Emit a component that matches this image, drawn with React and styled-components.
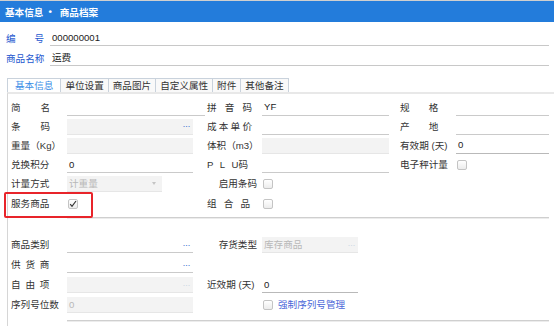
import React from "react";
import styled, { createGlobalStyle } from "styled-components";

const Global = createGlobalStyle`
  html, body { margin: 0; padding: 0; background: #fff; }
  body {
    font-family: "Liberation Sans", "Noto Sans CJK SC", sans-serif;
    font-size: 9.6px;
    color: #333;
  }
  #root { width: 554px; height: 326px; overflow: hidden; }
`;

const Page = styled.div`
  width: 554px;
  height: 326px;
  overflow: hidden;
  border-top: 1px solid #cfcfcf;
  box-sizing: border-box;
`;

const Header = styled.div`
  height: 21px;
  background: #237cdb;
  color: #fff;
  font-weight: bold;
  display: flex;
  align-items: center;
  padding-left: 5px;
`;

const Dot = styled.span`
  margin: 0 8px 0 5px;
`;

const TopForm = styled.div`
  padding: 5px 5px 0 6px;
`;

const TopRow = styled.div`
  display: flex;
  align-items: flex-end;
  height: 19px;
  line-height: 14px;
  margin-bottom: ${p => p.$mb || 0}px;
`;

const TopLabel = styled.div`
  width: 38px;
  flex: none;
  color: #2457cf;
  white-space: nowrap;
  display: flex;
  justify-content: space-between;
`;

const TopValue = styled.div`
  flex: 1;
  margin-left: 6px;
  padding-left: 2px;
  border-bottom: 1px solid #c8c8c8;
  color: #222;
  line-height: 14px;
`;

const Tabs = styled.div`
  display: flex;
  padding-left: 7px;
  margin-top: 12px;
  height: 14px;
`;

const Tab = styled.div`
  height: 14px;
  box-sizing: border-box;
  border: 1px solid #c9d2dc;
  border-bottom: none;
  margin-right: -1px;
  padding: 0 ${p => (p.$active ? 7 : 4)}px;
  background: ${p => (p.$active ? "#fff" : "#f9f9f9")};
  color: ${p => (p.$active ? "#3a8ee6" : "#333")};
  line-height: 14px;
  white-space: nowrap;
`;

const Panel = styled.div`
  margin-left: 7px;
  border-top: 2px solid #e8e8e8;
  border-left: 1px solid #d6d6d6;
  padding: 4px 0 0 3px;
  height: 240px;
`;

const Row = styled.div`
  display: grid;
  grid-template-columns: 196px 193px 149px;
  height: ${p => p.$h}px;
  align-items: center;
`;

const Field = styled.div`
  display: flex;
  align-items: center;
  position: relative;
  height: 100%;
`;

const LabelBox = styled.div`
  width: ${p => p.$w}px;
  flex: none;
  display: flex;
  justify-content: ${p => (p.$right ? "flex-end" : "flex-start")};
  padding-right: ${p => (p.$right ? 5 : 0)}px;
  box-sizing: border-box;
  color: #333;
  white-space: nowrap;
  line-height: 14px;
`;

const Spread = styled.span`
  display: inline-flex;
  justify-content: space-between;
  width: ${p => p.$span}px;
`;

function Label({ text, parts, w, span, right }) {
  const items = parts || [...(text || "")];
  return (
    <LabelBox $w={w} $right={right}>
      {span ? (
        <Spread $span={span}>
          {items.map((c, i) => (
            <span key={i}>{c}</span>
          ))}
        </Spread>
      ) : (
        text
      )}
    </LabelBox>
  );
}

const Control = styled.div`
  width: ${p => p.$w}px;
  height: 16px;
  box-sizing: border-box;
  border-bottom: 1px solid ${p => (p.$gray ? "#e6e6e6" : p.$dark ? "#b9b9b9" : "#cacaca")};
  background: ${p => (p.$gray ? "#f3f3f3" : "transparent")};
  display: flex;
  align-items: center;
  justify-content: space-between;
  padding: 0 3px 0 2px;
  color: ${p => (p.$muted ? "#b8b8b8" : "#222")};
  line-height: 14px;
  white-space: nowrap;
`;

const Dots = styled.span`
  color: ${p => (p.$faint ? "#cdd6e4" : "#3d6fd1")};
  font-size: 9px;
  letter-spacing: -0.5px;
`;

const Arrow = styled.span`
  width: 0;
  height: 0;
  border-left: 2.5px solid transparent;
  border-right: 2.5px solid transparent;
  border-top: 3px solid #c4c4c4;
  margin-right: 3px;
`;

const CheckBox = styled.span`
  width: 10px;
  height: 10px;
  box-sizing: border-box;
  border: 1px solid #c4c4c4;
  border-radius: 2px;
  background: linear-gradient(#ffffff, #ececec);
  display: inline-flex;
  align-items: center;
  justify-content: center;
  margin-left: 1px;
  flex: none;
`;

function Check({ checked }) {
  return (
    <CheckBox>
      {checked && (
        <svg width="8" height="8" viewBox="0 0 8 8">
          <path d="M1.2 4.2 L3 6.3 L7 1" fill="none" stroke="#333" strokeWidth="1.2" />
        </svg>
      )}
    </CheckBox>
  );
}

const CheckText = styled.span`
  margin-left: 5px;
  color: #4a66d8;
  line-height: 14px;
  white-space: nowrap;
`;

const Highlight = styled.div`
  position: absolute;
  left: -7px;
  top: -2.4px;
  width: 89px;
  height: 26px;
  box-sizing: border-box;
  border: 2px solid #e8242a;
  border-radius: 2px;
  pointer-events: none;
`;

const Rule = styled.div`
  margin-left: 56px;
  width: 482px;
  border-top: 1px solid #cfcfcf;
  border-bottom: 1px solid #ececec;
  margin-top: ${p => p.$mt}px;
  margin-bottom: ${p => p.$mb || 0}px;
`;

const U = 19.2;
const L = 20;

export default function App() {
  return (
    <>
      <Global />
      <Page>
        <Header>
          基本信息<Dot>•</Dot>商品档案
        </Header>
        <TopForm>
          <TopRow $mb={1}>
            <TopLabel>
              <span>编</span>
              <span>号</span>
            </TopLabel>
            <TopValue>000000001</TopValue>
          </TopRow>
          <TopRow>
            <TopLabel>商品名称</TopLabel>
            <TopValue>运费</TopValue>
          </TopRow>
        </TopForm>
        <Tabs>
          <Tab $active>基本信息</Tab>
          <Tab>单位设置</Tab>
          <Tab>商品图片</Tab>
          <Tab>自定义属性</Tab>
          <Tab>附件</Tab>
          <Tab>其他备注</Tab>
        </Tabs>
        <Panel>
          <Row $h={U}>
            <Field>
              <Label text="简名" w={56} span={39} />
              <Control $w={138} />
            </Field>
            <Field>
              <Label text="拼音码" w={55} span={45} />
              <Control $w={127}>YF</Control>
            </Field>
            <Field>
              <Label text="规格" w={56} span={38.4} />
              <Control $w={93} />
            </Field>
          </Row>
          <Row $h={U}>
            <Field>
              <Label text="条码" w={56} span={39} />
              <Control $w={126} $gray>
                <span />
                <Dots>···</Dots>
              </Control>
            </Field>
            <Field>
              <Label text="成本单价" w={55} span={45} />
              <Control $w={127} />
            </Field>
            <Field>
              <Label text="产地" w={56} span={38.4} />
              <Control $w={93} />
            </Field>
          </Row>
          <Row $h={U}>
            <Field>
              <Label text="重量（Kg）" w={56} />
              <Control $w={126} $gray />
            </Field>
            <Field>
              <Label text="体积（m3）" w={55} />
              <Control $w={127} $gray />
            </Field>
            <Field>
              <Label text="有效期 (天)" w={56} />
              <Control $w={93} $dark>0</Control>
            </Field>
          </Row>
          <Row $h={U}>
            <Field>
              <Label text="兑换积分" w={56} />
              <Control $w={126}>0</Control>
            </Field>
            <Field>
              <Label parts={["P", "L", "U码"]} w={55} span={41} />
              <Control $w={127} />
            </Field>
            <Field>
              <Label text="电子秤计量" w={56} />
              <Check />
            </Field>
          </Row>
          <Row $h={U}>
            <Field>
              <Label text="计量方式" w={56} />
              <Control $w={95} $gray $muted>
                <span>计重量</span>
                <Arrow />
              </Control>
            </Field>
            <Field>
              <Label text="启用条码" w={55} right />
              <Check />
            </Field>
            <Field />
          </Row>
          <Row $h={U}>
            <Field>
              <Highlight />
              <Label text="服务商品" w={56} />
              <Check checked />
            </Field>
            <Field>
              <Label text="组合品" w={55} span={43} />
              <Check />
            </Field>
            <Field />
          </Row>
          <Rule $mt={4} $mb={16} />
          <Row $h={L}>
            <Field>
              <Label text="商品类别" w={56} />
              <Control $w={126}>
                <span />
                <Dots>···</Dots>
              </Control>
            </Field>
            <Field>
              <Label text="存货类型" w={55} right />
              <Control $w={96} $gray $muted>
                <span>库存商品</span>
                <Dots $faint>···</Dots>
              </Control>
            </Field>
            <Field />
          </Row>
          <Row $h={L}>
            <Field>
              <Label text="供货商" w={56} span={38.4} />
              <Control $w={126}>
                <span />
                <Dots>···</Dots>
              </Control>
            </Field>
            <Field />
            <Field />
          </Row>
          <Row $h={L}>
            <Field>
              <Label text="自由项" w={56} span={38.4} />
              <Control $w={126} $gray>
                <span />
                <Dots $faint>···</Dots>
              </Control>
            </Field>
            <Field>
              <Label text="近效期 (天)" w={55} />
              <Control $w={96} $dark>0</Control>
            </Field>
            <Field />
          </Row>
          <Row $h={L}>
            <Field>
              <Label text="序列号位数" w={56} />
              <Control $w={126} $gray $muted>0</Control>
            </Field>
            <Field>
              <Label text="" w={55} />
              <Check />
              <CheckText>强制序列号管理</CheckText>
            </Field>
            <Field />
          </Row>
          <Rule $mt={5} />
        </Panel>
      </Page>
    </>
  );
}
